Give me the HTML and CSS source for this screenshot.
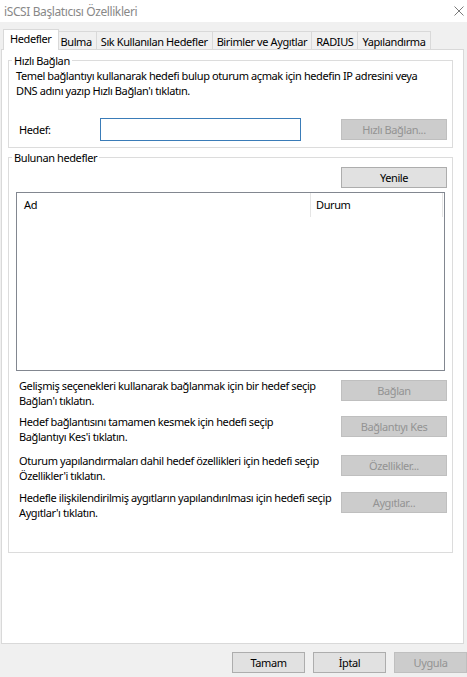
FILE: index.html
```html
<!DOCTYPE html>
<html lang="tr">
<head>
<meta charset="utf-8">
<title>iSCSI Başlatıcısı Özellikleri</title>
<link rel="stylesheet" href="styles.css">
</head>
<body>
<div class="window">
  <div class="titlebar">
    <span class="title">iSCSI Başlatıcısı Özellikleri</span>
    <svg class="close" width="10" height="10" viewBox="0 0 10 10"><path d="M0.5 0.5 L9.5 9.5 M9.5 0.5 L0.5 9.5" stroke="#7a7a7a" stroke-width="1" fill="none"/></svg>
  </div>
  <div class="tabstrip">
    <div class="tab tab-active">Hedefler</div>
    <div class="tab">Bulma</div>
    <div class="tab">Sık Kullanılan Hedefler</div>
    <div class="tab">Birimler ve Aygıtlar</div>
    <div class="tab">RADIUS</div>
    <div class="tab">Yapılandırma</div>
  </div>
  <div class="panel">
    <fieldset class="group quick">
      <legend>Hızlı Bağlan</legend>
      <p class="desc">Temel bağlantıyı kullanarak hedefi bulup oturum açmak için hedefin IP adresini veya<br>DNS adını yazıp Hızlı Bağlan'ı tıklatın.</p>
      <div class="target-row">
        <label class="target-label">Hedef:</label>
        <input class="textbox" type="text">
        <button class="btn" disabled>Hızlı Bağlan...</button>
      </div>
    </fieldset>
    <fieldset class="group found">
      <legend>Bulunan hedefler</legend>
      <div class="refresh-row"><button class="btn">Yenile</button></div>
      <div class="listview">
        <div class="lv-header">
          <div class="lv-col col-name">Ad</div>
          <div class="lv-col col-status">Durum</div>
        </div>
      </div>
      <div class="action">
        <p>Gelişmiş seçenekleri kullanarak bağlanmak için bir hedef seçip<br>Bağlan'ı tıklatın.</p>
        <button class="btn" disabled>Bağlan</button>
      </div>
      <div class="action gap-sm">
        <p>Hedef bağlantısını tamamen kesmek için hedefi seçip<br>Bağlantıyı Kes'i tıklatın.</p>
        <button class="btn" disabled>Bağlantıyı Kes</button>
      </div>
      <div class="action gap-lg">
        <p>Oturum yapılandırmaları dahil hedef özellikleri için hedefi seçip<br>Özellikler'i tıklatın.</p>
        <button class="btn" disabled>Özellikler...</button>
      </div>
      <div class="action">
        <p>Hedefle ilişkilendirilmiş aygıtların yapılandırılması için hedefi seçip<br>Aygıtlar'ı tıklatın.</p>
        <button class="btn" disabled>Aygıtlar...</button>
      </div>
    </fieldset>
  </div>
  <div class="footer">
    <button class="btn btn-dlg">Tamam</button>
    <button class="btn btn-dlg">İptal</button>
    <button class="btn btn-dlg" disabled>Uygula</button>
  </div>
</div>
</body>
</html>
```
FILE: styles.css
```css
* { box-sizing: border-box; }
html, body { margin: 0; padding: 0; }
body {
  width: 467px;
  height: 677px;
  overflow: hidden;
  background: #f0f0f0;
  font-family: "Noto Sans", sans-serif;
  font-size: 11px;
  letter-spacing: -0.4px;
  color: #000;
}
.window { display: flex; flex-direction: column; height: 677px; }

.titlebar {
  height: 22px;
  background: #fff;
  display: flex;
  align-items: center;
  padding: 0 3px 0 4px;
}
.title { color: #888; font-size: 12px; line-height: 15px; }
.close { margin-left: auto; display: block; }

.tabstrip {
  height: 27px;
  display: flex;
  align-items: flex-end;
  padding-left: 5px;
}
.tab {
  height: 18px;
  padding: 2px 4px 0;
  border: 1px solid #d9d9d9;
  border-bottom: none;
  margin-left: -1px;
  line-height: 15px;
  background: #f0f0f0;
  white-space: nowrap;
}
.tab-active {
  height: 21px;
  padding: 1px 6px 0;
  margin: 0 -2px -1px -2px;
  background: #fff;
  position: relative;
  z-index: 1;
}

.panel {
  flex: 1;
  margin-left: 1px;
  width: 463px;
  border: 1px solid #d9d9d9;
  background: #fff;
  padding: 3px 10px 0 6px;
}

.group {
  margin: 0;
  min-width: 0;
  border: 1px solid #dcdcdc;
  padding: 0 5px 6px 7px;
}
.group legend {
  padding: 0 2px;
  margin-left: -4px;
  line-height: 15px;
}
.found { margin-top: 2px; padding-bottom: 32px; }

.desc { margin: 0; line-height: 15px; white-space: nowrap; }

.target-row { display: flex; align-items: center; margin-top: 20px; }
.target-label { width: 84px; padding-left: 3px; line-height: 15px; }
.textbox {
  width: 201px;
  height: 23px;
  margin: 0;
  padding: 0 3px;
  border: 1px solid #3a7cb8;
  background: #fff;
  outline: none;
}

.btn {
  width: 106px;
  height: 21px;
  margin: 0 0 0 auto;
  padding: 0;
  border: 1px solid #adadad;
  background: #e1e1e1;
  font: inherit;
  letter-spacing: inherit;
  color: #000;
  line-height: 19px;
  text-align: center;
  white-space: nowrap;
}
.btn:disabled {
  background: #cccccc;
  border-color: #bfbfbf;
  color: #939393;
}

.refresh-row { display: flex; padding-top: 2px; }

.listview {
  margin: 4px 2px 0 0;
  height: 179px;
  border: 1px solid #828790;
  background: #fff;
}
.lv-header { display: flex; height: 24px; }
.lv-col {
  border-right: 1px solid #e5e5e5;
  line-height: 24px;
  padding-left: 7px;
}
.col-name { width: 294px; }
.col-status { width: 132px; padding-left: 5px; }

.action { display: flex; align-items: flex-start; margin-top: 7px; }
.action.gap-sm { margin-top: 6px; }
.action.gap-lg { margin-top: 9px; }
.action p { margin: 0; padding-left: 3px; line-height: 15px; white-space: nowrap; }
.action .btn { margin-top: 2px; }

.footer {
  height: 33px;
  display: flex;
  justify-content: flex-end;
  align-items: flex-start;
  gap: 8px;
  padding-top: 8px;
}
.btn-dlg { width: 73px; margin: 0; }
```
